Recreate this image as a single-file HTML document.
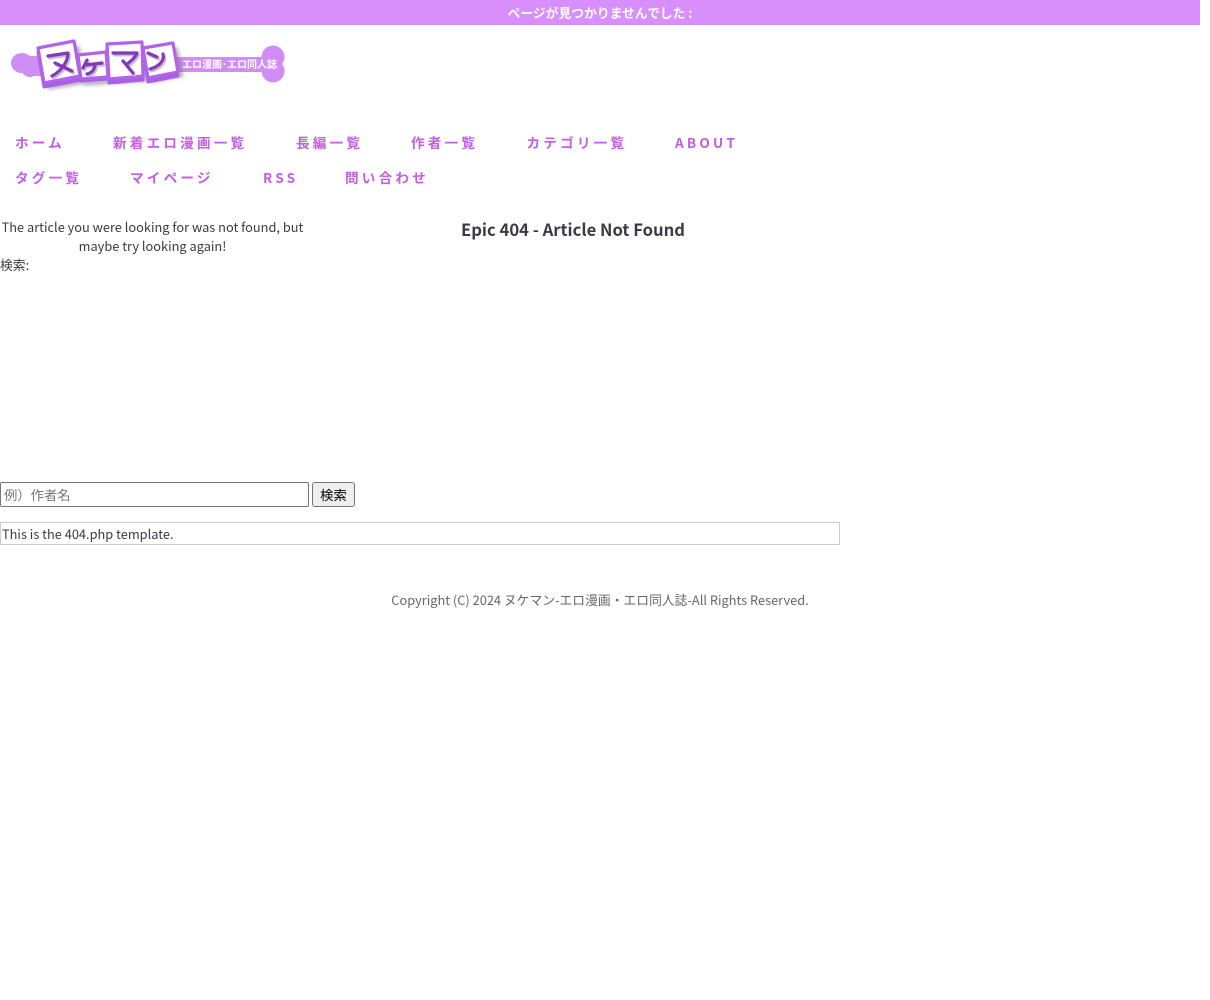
<!DOCTYPE html>
<html lang="ja">
<head>
<meta charset="utf-8">
<title>ページが見つかりませんでした</title>
<style>
html,body{margin:0;padding:0;background:#fff}
body{width:1210px;height:1000px;position:relative;overflow:hidden;font-family:"Noto Sans CJK JP","Liberation Sans",sans-serif;color:#3b3b45;font-size:12.8px;line-height:19px}
.a{position:absolute;white-space:nowrap;margin:0}
#bar{left:0;top:0;width:1200px;height:25px;background:#d98ffb;color:#fff;font-weight:700;font-size:12.8px;line-height:26px;text-align:center}
.n{color:#c25de4;font-weight:700;font-size:13.6px;letter-spacing:3.2px;line-height:20px;text-decoration:none}
#h{left:313px;width:520px;top:217px;text-align:center;font-size:16.64px;line-height:24px;font-weight:700;color:#3b3b45}
#p{left:0;top:217px;width:305px;text-align:center;white-space:normal}
input{position:absolute;box-sizing:border-box;font-family:"Noto Sans CJK JP",sans-serif;font-size:13.333px;margin:0}
#q{left:0;top:482px;width:309px;height:25px;border:1px solid #767676;border-radius:2px;padding:1px 3px;background:#fff;color:#000}
#q::placeholder{color:#757575;opacity:1}
#b{left:312px;top:482px;width:43px;height:25px;border:1px solid #767676;border-radius:3px;background:#efefef;color:#000;padding:0}
#t{left:0;top:522px;width:840px;height:23px;box-sizing:border-box;border:1px solid #ccc;padding:1px 1px;line-height:19px}
#c{left:0;top:590px;width:1200px;text-align:center;color:#66666e;font-size:12.8px}
</style>
</head>
<body>
<div class="a" id="bar">ページが見つかりませんでした :</div>

<svg class="a" style="left:0;top:0" width="300" height="100" viewBox="0 0 300 100">
  <defs>
    <filter id="bl" x="-20%" y="-20%" width="140%" height="140%"><feGaussianBlur stdDeviation="1.5"/></filter>
    <filter id="sf" x="-5%" y="-5%" width="110%" height="110%"><feGaussianBlur stdDeviation="0.35"/></filter>
  </defs>
  <g filter="url(#sf)">
    <ellipse cx="22" cy="63" rx="11" ry="10" fill="#d08df5"/>
    <circle cx="30" cy="68" r="9" fill="#d08df5"/>
    <rect x="26" y="56" width="20" height="20" fill="#d08df5"/>
    <rect x="170" y="57" width="100" height="15" fill="#d08df5"/>
    <circle cx="273" cy="57" r="11.5" fill="#d08df5"/>
    <circle cx="273" cy="71" r="11.5" fill="#d08df5"/>
    <g fill="#777" opacity=".5" filter="url(#bl)">
      <polygon points="42,52 80,46 86,84 48,90"/>
      <polygon points="80,58 110,56 112,84 84,86"/>
      <polygon points="110,48 146,46 148,82 114,84"/>
      <polygon points="147,52 178,47 184,77 152,83"/>
    </g>
    <g fill="#a95ee6" stroke="#a95ee6" stroke-width="3" stroke-linejoin="round">
      <polygon points="38,52 75,45 81,80 44,87"/>
      <polygon points="78,56 106,53 108,79 81,81"/>
      <polygon points="107,48 142,46 143,80 109,83"/>
      <polygon points="143,52 173,47 178,76 148,82"/>
    </g>
    <g fill="#fff" stroke="#b163ea" stroke-width="3.2" stroke-linejoin="round">
      <polygon points="38,48 74,41 80,76 44,83"/>
      <polygon points="78,55 106,52 108,77 81,79"/>
      <polygon points="107,44 142,42 143,76 109,79"/>
      <polygon points="143,48 173,43 178,72 148,78"/>
    </g>
    <g fill="none" stroke="#c9b8d6" stroke-width="3" stroke-linecap="round" stroke-linejoin="round" transform="translate(1.5,2)">
      <path d="M48 56 L68 53 C68 62 61 71 52 76 M55 63 L72 71"/>
      <path d="M87 60 L83 68 M85 65 L102 63 M95 64 C95 69 92 73 87 74"/>
      <path d="M113 53 L137 53 C135 58 131 61 127 64 M123 61 L133 73"/>
      <path d="M148 53 L157 57 M163 54 C165 61 158 67 150 69"/>
    </g>
    <g fill="none" stroke="#8339b8" stroke-width="3.2" stroke-linecap="round" stroke-linejoin="round">
      <path d="M48 56 L68 53 C68 62 61 71 52 76 M55 63 L72 71"/>
      <path d="M87 60 L83 68 M85 65 L102 63 M95 64 C95 69 92 73 87 74"/>
      <path d="M113 53 L137 53 C135 58 131 61 127 64 M123 61 L133 73"/>
      <path d="M148 53 L157 57 M163 54 C165 61 158 67 150 69"/>
    </g>
    <text x="182" y="68" font-size="10" font-weight="700" fill="#fff" font-family="'Noto Sans CJK JP',sans-serif">エロ漫画･エロ同人誌</text>
  </g>
</svg>

<a class="a n" style="left:15px;top:132px">ホーム</a>
<a class="a n" style="left:113px;top:132px">新着エロ漫画一覧</a>
<a class="a n" style="left:296px;top:132px">長編一覧</a>
<a class="a n" style="left:411px;top:132px">作者一覧</a>
<a class="a n" style="left:526.5px;top:132px">カテゴリ一覧</a>
<a class="a n" style="left:675px;top:132px">ABOUT</a>
<a class="a n" style="left:15px;top:167px">タグ一覧</a>
<a class="a n" style="left:130px;top:167px">マイページ</a>
<a class="a n" style="left:263px;top:167px">RSS</a>
<a class="a n" style="left:345px;top:167px">問い合わせ</a>

<h1 class="a" id="h">Epic 404 - Article Not Found</h1>
<p class="a" id="p">The article you were looking for was not found, but maybe try looking again!</p>
<div class="a" style="left:0;top:255px">検索:</div>
<input id="q" type="text" placeholder="例）作者名">
<input id="b" type="button" value="検索">
<div class="a" id="t">This is the 404.php template.</div>
<div class="a" id="c">Copyright (C) 2024 ヌケマン-エロ漫画・エロ同人誌-All Rights Reserved.</div>
</body>
</html>
